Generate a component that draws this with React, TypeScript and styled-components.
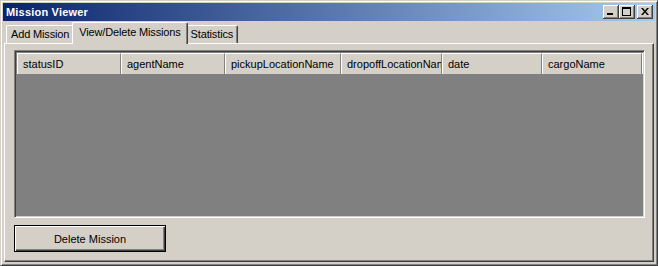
import { createGlobalStyle, styled } from "styled-components";

const GlobalStyle = createGlobalStyle`
  html, body {
    margin: 0;
    padding: 0;
    background: #d4d0c8;
  }
  * {
    box-sizing: border-box;
  }
`;

const Window = styled.div`
  width: 658px;
  height: 266px;
  display: flex;
  flex-direction: column;
  padding: 2px;
  background: #d4d0c8;
  border: 1px solid;
  border-color: #d4d0c8 #404040 #404040 #d4d0c8;
  box-shadow: inset 1px 1px #ffffff, inset -1px -1px #808080;
  font-family: "Liberation Sans", Arial, sans-serif;
  font-size: 11px;
  color: #000;
`;

const TitleBar = styled.div`
  height: 18px;
  display: flex;
  align-items: center;
  justify-content: space-between;
  padding: 0 2px 0 3px;
  background: linear-gradient(to right, #0a246a, #a6caf0);
`;

const Title = styled.span`
  color: #fff;
  font-weight: bold;
  font-size: 11px;
  letter-spacing: 0.2px;
`;

const CaptionButtons = styled.div`
  display: flex;
`;

const CaptionButton = styled.div<{ $gap?: boolean }>`
  width: 16px;
  height: 14px;
  margin-left: ${(p) => (p.$gap ? "2px" : "0")};
  display: flex;
  align-items: center;
  justify-content: center;
  background: #d4d0c8;
  border-right: 1px solid #404040;
  border-bottom: 1px solid #404040;
  box-shadow: inset 1px 1px #ffffff, inset -1px -1px #808080;
`;

const Body = styled.div`
  flex: 1;
  display: flex;
  flex-direction: column;
  padding: 2px 1px 1px 1px;
`;

const TabStrip = styled.div`
  height: 20px;
  display: flex;
  align-items: flex-end;
  padding-left: 2px;
  position: relative;
  z-index: 1;
`;

const Tab = styled.div<{ $active?: boolean }>`
  height: ${(p) => (p.$active ? "22px" : "18px")};
  margin: ${(p) => (p.$active ? "0 -2px -1px -2px" : "0")};
  padding: ${(p) => (p.$active ? "3px 6px 0 6px" : "2px 4px 0 4px")};
  background: #d4d0c8;
  border-top: 1px solid #ffffff;
  border-left: 1px solid #ffffff;
  border-right: 1px solid #404040;
  border-radius: 2px 2px 0 0;
  box-shadow: inset -1px 0 #808080;
  white-space: nowrap;
  letter-spacing: -0.15px;
  position: ${(p) => (p.$active ? "relative" : "static")};
  z-index: ${(p) => (p.$active ? 2 : 0)};
`;

const Panel = styled.div`
  flex: 1;
  display: flex;
  flex-direction: column;
  padding: 6px 8px 0 9px;
  border-top: 1px solid #ffffff;
  border-left: 1px solid #ffffff;
  border-right: 1px solid #404040;
  border-bottom: 1px solid #404040;
  box-shadow: inset -1px -1px #808080;
`;

const ListView = styled.div`
  height: 168px;
  display: flex;
  flex-direction: column;
  background: #808080;
  border: 1px solid;
  border-color: #808080 #ffffff #ffffff #808080;
  box-shadow: inset 1px 1px #404040, inset -1px -1px #d4d0c8;
  padding: 2px;
`;

const HeaderRow = styled.div`
  height: 21px;
  display: flex;
  background: #d4d0c8;
`;

const HeaderCell = styled.div<{ $w: number }>`
  width: ${(p) => p.$w}px;
  flex: none;
  display: flex;
  align-items: center;
  padding-left: 5px;
  overflow: hidden;
  white-space: nowrap;
  border-top: 1px solid #ffffff;
  border-left: 1px solid #ffffff;
  border-right: 1px solid #808080;
`;

const HeaderFill = styled.div`
  flex: 1;
  border-top: 1px solid #ffffff;
  border-left: 1px solid #ffffff;
`;

const ButtonRow = styled.div`
  padding-top: 7px;
  display: flex;
`;

const Button = styled.button`
  width: 152px;
  height: 27px;
  font-family: "Liberation Sans", Arial, sans-serif;
  font-size: 11px;
  color: #000;
  background: #d4d0c8;
  border: 1px solid #000;
  box-shadow: inset 1px 1px #ffffff, inset -1px -1px #404040, inset -2px -2px #808080;
  padding: 0;
  cursor: pointer;
`;

const columns = [
  { name: "statusID", w: 104 },
  { name: "agentName", w: 104 },
  { name: "pickupLocationName", w: 116 },
  { name: "dropoffLocationName", w: 101 },
  { name: "date", w: 100 },
  { name: "cargoName", w: 100 },
];

export default function App() {
  return (
    <>
      <GlobalStyle />
      <Window>
        <TitleBar>
          <Title>Mission Viewer</Title>
          <CaptionButtons>
            <CaptionButton>
              <svg width="8" height="7" viewBox="0 0 8 7">
                <rect x="0" y="5" width="6" height="2" fill="#000" />
              </svg>
            </CaptionButton>
            <CaptionButton>
              <svg width="9" height="9" viewBox="0 0 9 9">
                <rect x="0.5" y="0.5" width="8" height="8" fill="none" stroke="#000" />
                <rect x="0" y="0" width="9" height="2" fill="#000" />
              </svg>
            </CaptionButton>
            <CaptionButton $gap>
              <svg width="8" height="7" viewBox="0 0 8 7">
                <path d="M0 0h2l2 2.5L6 0h2L5 3.5 8 7H6L4 4.5 2 7H0l3-3.5z" fill="#000" />
              </svg>
            </CaptionButton>
          </CaptionButtons>
        </TitleBar>
        <Body>
          <TabStrip>
            <Tab>Add Mission</Tab>
            <Tab $active>View/Delete Missions</Tab>
            <Tab>Statistics</Tab>
          </TabStrip>
          <Panel>
            <ListView>
              <HeaderRow>
                {columns.map((c) => (
                  <HeaderCell key={c.name} $w={c.w}>
                    {c.name}
                  </HeaderCell>
                ))}
                <HeaderFill />
              </HeaderRow>
            </ListView>
            <ButtonRow>
              <Button>Delete Mission</Button>
            </ButtonRow>
          </Panel>
        </Body>
      </Window>
    </>
  );
}
